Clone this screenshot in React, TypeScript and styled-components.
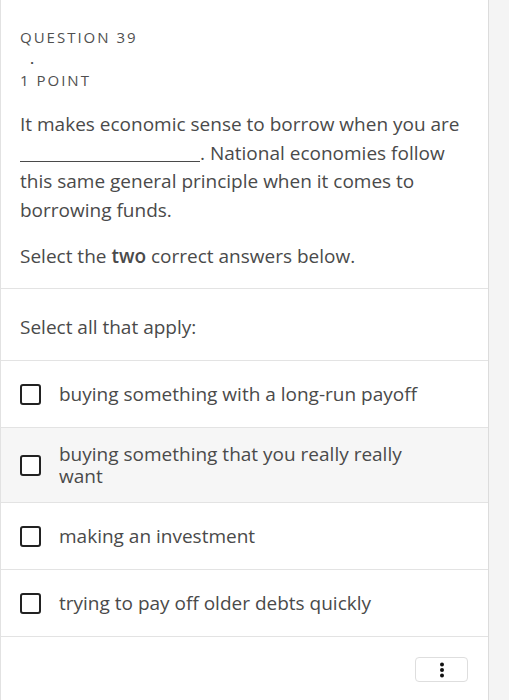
import React from "react";
import styled, { createGlobalStyle } from "styled-components";

const Global = createGlobalStyle`
  html, body { margin: 0; padding: 0; background: #f4f4f4; }
  body { font-family: "Open Sans", "Noto Sans", sans-serif; color: #4a4a4a; }
  * { box-sizing: border-box; }
`;

const Card = styled.div`
  width: 489px;
  min-height: 700px;
  background: #ffffff;
  border-left: 1px solid #e2e2e2;
  border-right: 1px solid #dcdcdc;
  display: flex;
  flex-direction: column;
`;

const Section = styled.div<{ $pt: number; $pb: number }>`
  padding: ${(p) => p.$pt}px 20px ${(p) => p.$pb}px 19px;
  border-bottom: 1px solid #e3e3e3;
`;

const Label = styled.div`
  font-size: 15px;
  line-height: 20px;
  letter-spacing: 2px;
  color: #505050;
  text-transform: uppercase;
`;

const DotLine = styled.div`
  height: 23px;
  padding-left: 10px;
  font-size: 15px;
  font-weight: 600;
  line-height: 22px;
  color: #444;
`;

const Paragraph = styled.p<{ $mt: number }>`
  margin: ${(p) => p.$mt}px 0 0;
  font-size: 19px;
  line-height: 28.5px;
  color: #4a4a4a;
`;

const Blank = styled.span`
  display: inline-block;
  width: 180px;
  height: 0;
  border-bottom: 1px solid #4a4a4a;
  vertical-align: -2px;
`;

const Strong = styled.span`
  font-weight: 600;
`;

const Option = styled.label<{ $shaded?: boolean }>`
  display: flex;
  align-items: center;
  gap: 18px;
  min-height: 67px;
  padding: 15px 20px 15px 19px;
  background: ${(p) => (p.$shaded ? "#f6f6f6" : "#ffffff")};
  border-bottom: 1px solid #e3e3e3;
`;

const Box = styled.span`
  flex: none;
  width: 21px;
  height: 21px;
  border: 2px solid #222;
  border-radius: 3px;
  background: #fff;
`;

const OptionText = styled.span`
  max-width: 365px;
  font-size: 19px;
  line-height: 22px;
  color: #4a4a4a;
`;

const Footer = styled.div`
  display: flex;
  justify-content: flex-end;
  padding: 20px 20px;
`;

const MoreButton = styled.button`
  width: 53px;
  height: 25px;
  padding: 0;
  border: 1px solid #dedede;
  border-radius: 4px;
  background: #fff;
  display: flex;
  align-items: center;
  justify-content: center;
`;

const options = [
  "buying something with a long-run payoff",
  "buying something that you really really want",
  "making an investment",
  "trying to pay off older debts quickly",
];

export default function App() {
  return (
    <>
      <Global />
      <Card>
        <Section $pt={27} $pb={17}>
          <Label>Question 39</Label>
          <DotLine>.</DotLine>
          <Label>1 Point</Label>
          <Paragraph $mt={20}>
            It makes economic sense to borrow when you are <Blank />. National
            economies follow this same general principle when it comes to
            borrowing funds.
          </Paragraph>
          <Paragraph $mt={18}>
            Select the <Strong>two</Strong> correct answers below.
          </Paragraph>
        </Section>
        <Section $pt={24} $pb={19}>
          <Paragraph $mt={0}>Select all that apply:</Paragraph>
        </Section>
        {options.map((o, i) => (
          <Option key={o} $shaded={i === 1}>
            <Box />
            <OptionText>{o}</OptionText>
          </Option>
        ))}
        <Footer>
          <MoreButton aria-label="More">
            <svg width="6" height="18" viewBox="0 0 6 18">
              <circle cx="3" cy="3.5" r="2" fill="#111" />
              <circle cx="3" cy="9" r="2" fill="#111" />
              <circle cx="3" cy="14.5" r="2" fill="#111" />
            </svg>
          </MoreButton>
        </Footer>
      </Card>
    </>
  );
}
